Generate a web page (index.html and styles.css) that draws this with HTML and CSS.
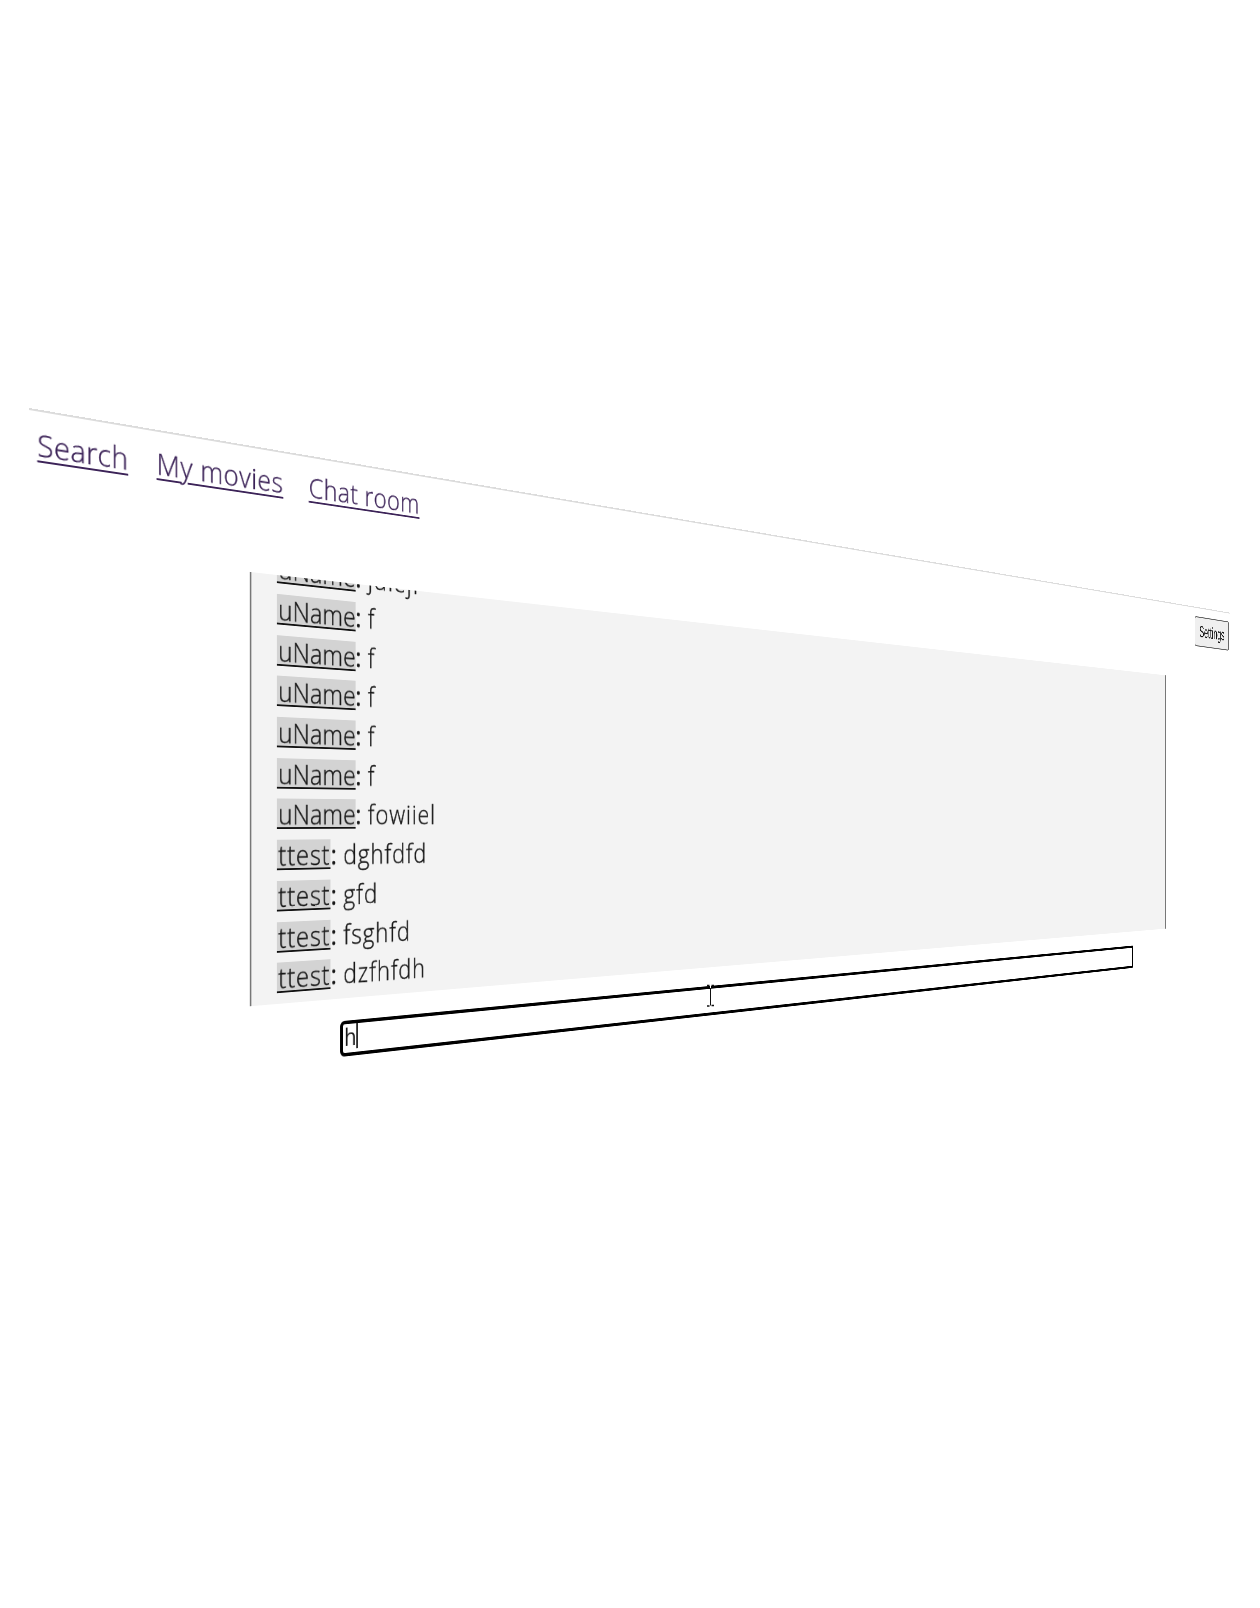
FILE: index.html
```html
<!DOCTYPE html>
<html lang="en">
<head>
<meta charset="utf-8">
<title>Chat room</title>
<link rel="stylesheet" href="styles.css">
</head>
<body>
<div class="page">
  <header class="bar">
    <nav class="nav">
      <a class="link search">Search</a>
      <a class="link movies">My movies</a>
      <a class="link chat">Chat room</a>
    </nav>
    <button class="settings"><span>Settings</span></button>
  </header>
  <main class="room">
    <section class="log">
      <p class="row"><span class="user">uName</span><b>:</b> jdlejf</p>
      <p class="row"><span class="user">uName</span><b>:</b> f</p>
      <p class="row"><span class="user">uName</span><b>:</b> f</p>
      <p class="row"><span class="user">uName</span><b>:</b> f</p>
      <p class="row"><span class="user">uName</span><b>:</b> f</p>
      <p class="row"><span class="user">uName</span><b>:</b> f</p>
      <p class="row"><span class="user">uName</span><b>:</b> fowiiel</p>
      <p class="row"><span class="user short">ttest</span><b>:</b> dghfdfd</p>
      <p class="row"><span class="user short">ttest</span><b>:</b> gfd</p>
      <p class="row"><span class="user short">ttest</span><b>:</b> fsghfd</p>
      <p class="row"><span class="user short">ttest</span><b>:</b> dzfhfdh</p>
    </section>
    <div class="field"><span>h</span><i class="caret"></i></div>
  </main>
</div>
<svg class="pointer" width="9" height="24" viewBox="0 0 9 24" fill="none">
  <path d="M1 1.5h2.5M5.5 1.5H8M1 22h2.5M5.5 21.5H8" stroke="#111" stroke-width="1.6"/>
  <path d="M4.5 0v4" stroke="#fff"/>
  <path d="M4.5 4v17.5" stroke="#111"/>
</svg>
</body>
</html>
```
FILE: styles.css
```css
* { box-sizing: border-box; }
html { overflow: hidden; }
body {
  margin: 0;
  height: 1608px;
  padding: 408px 0 0 29px;
  overflow: hidden;
  position: relative;
  background: #fff;
  color: #161616;
  font-family: "Open Sans", "Noto Sans", sans-serif;
  font-weight: 300;
}
.page {
  width: 2447px;
  height: 700px;
  border-top: 2px solid #dcdcdc;
  transform-origin: 0 0;
  transform: matrix3d(0.9757, 0.16625, 0, 0.0004035, 0, 1, 0, 0, 0, 0, 1, 0, 0, 0, 0, 1);
}
.bar {
  display: flex;
  justify-content: space-between;
  height: 136.5px;
  padding: 16px 6px 0 8.5px;
}
.nav { display: flex; gap: 32.6px; }
.link {
  height: 34px;
  font-size: 31px;
  line-height: 34px;
  white-space: nowrap;
  color: #3c2358;
  -webkit-text-stroke: .3px #3c2358;
  text-decoration: underline;
  text-decoration-thickness: 2.4px;
  text-underline-offset: 4px;
}
.search { width: 97px; letter-spacing: .35px; }
.movies { width: 153.5px; letter-spacing: .65px; }
.chat { width: 152.4px; letter-spacing: .55px; }
.settings {
  width: 134px;
  height: 58px;
  padding: 0;
  border: 2px solid #666;
  border-radius: 5px;
  background: #efefef;
  color: #111;
  font: 31px "Liberation Sans", Arial, sans-serif;
}
.settings span { display: inline-block; transform: scaleX(.88); }
.room { display: flex; flex-direction: column; align-items: center; gap: 26px; }
.log {
  display: flex;
  flex-direction: column;
  justify-content: flex-end;
  width: 1950px;
  height: 478px;
  padding: 0 34px 9.6px 32.2px;
  border: solid #777;
  border-width: 0 4px 0 2px;
  background: #f3f3f3;
  overflow: hidden;
}
.row {
  flex: none;
  height: 45.7px;
  margin: 0;
  padding-top: 10px;
  font-size: 31px;
  line-height: 34px;
  letter-spacing: 1.4px;
  word-spacing: -2px;
  white-space: nowrap;
  -webkit-text-stroke: .4px #161616;
}
.row b { font-weight: 400; }
.user {
  display: inline-block;
  width: 104px;
  height: 34px;
  padding-left: 2px;
  letter-spacing: .2px;
  background: #d3d3d3;
  border-bottom: 2.6px solid #111;
}
.short { width: 70.5px; letter-spacing: 1.1px; }
.field {
  display: flex;
  align-items: center;
  width: 1716px;
  height: 41px;
  padding: 0 0 3px 2px;
  border: 4px solid #000;
  border-radius: 6px 3px 3px 6px;
  font-size: 27px;
  font-weight: 400;
}
.caret { width: 2px; height: 29px; background: #111; }
.pointer { position: absolute; left: 706px; top: 984px; }
```
